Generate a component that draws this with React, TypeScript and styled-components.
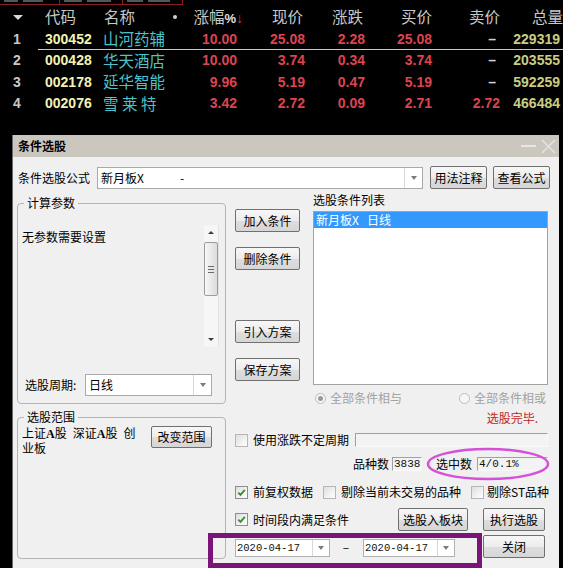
import React from "react";
import styled, { createGlobalStyle, css } from "styled-components";

const CJK = `"Noto Sans CJK SC", "Noto Sans", sans-serif`;
const NUM = `"Liberation Sans", Arial, sans-serif`;
const MONO = `"Liberation Mono", "DejaVu Sans Mono", monospace`;

const GlobalStyle = createGlobalStyle`
  html, body { margin: 0; padding: 0; background: #000; }
  body { width: 563px; height: 568px; overflow: hidden; font-family: ${CJK}; }
  *, *::before, *::after { box-sizing: border-box; }
`;

const Screen = styled.div`
  position: relative;
  width: 563px;
  height: 568px;
  overflow: hidden;
  background: #000;
  display: flex;
  flex-direction: column;
`;

/* ---------- top tab strip ---------- */
const TabStrip = styled.div`
  flex: none;
  display: flex;
  height: 6px;
`;
const TabPiece = styled.div<{ $w: number; $edge?: boolean }>`
  width: ${(p) => p.$w}px;
  height: 5px;
  display: flex;
  gap: 5px;
  padding: 0 4px;
  border-bottom: 1px solid #8c1e24;
  ${(p) => p.$edge && css`border-right: 1px solid #8c1e24;`}
`;
const TabGlyph = styled.span<{ $w: number }>`
  width: ${(p) => p.$w}px;
  height: 2px;
  background: #4d5a58;
`;

/* ---------- quote table ---------- */
const COLS = "38px 62px 80px 60px 65px 60px 67px 68px 63px";

const HeadRow = styled.div`
  flex: none;
  display: grid;
  grid-template-columns: ${COLS};
  height: 22px;
  align-items: center;
  color: #c8c8c8;
  font-family: ${CJK};
  font-size: 15.5px;
  line-height: 1;
`;
const HeadCell = styled.div<{ $left?: boolean; $pl?: number; $pr?: number }>`
  text-align: ${(p) => (p.$left ? "left" : "right")};
  padding-left: ${(p) => p.$pl ?? 0}px;
  padding-right: ${(p) => p.$pr ?? 0}px;
  white-space: nowrap;
`;
const SortCell = styled.div`
  padding-left: 13px;
  display: flex;
  align-items: center;
  &::before {
    content: "";
    border-left: 5px solid transparent;
    border-right: 5px solid transparent;
    border-top: 5px solid #d8d8d8;
  }
`;
const NameHead = styled.div`
  display: flex;
  align-items: center;
  justify-content: space-between;
  padding: 0 3px 0 4px;
`;
const Dot = styled.span`
  width: 4px;
  height: 4px;
  border-radius: 50%;
  background: #d0d0d0;
`;
const PctMark = styled.span`
  font-family: ${NUM};
  font-weight: bold;
  font-size: 13px;
  color: #e0e0e0;
`;
const SortArrow = styled.span`
  font-family: ${NUM};
  font-weight: bold;
  font-size: 14px;
  color: #e03040;
  margin-right: -3px;
`;

const DataRow = styled.div<{ $selected?: boolean }>`
  position: relative;
  flex: none;
  display: grid;
  grid-template-columns: ${COLS};
  height: 21.5px;
  align-items: center;
  font-family: ${NUM};
  font-weight: bold;
  font-size: 14px;
  line-height: 1;
  ${(p) =>
    p.$selected &&
    css`
      &::after {
        content: "";
        position: absolute;
        left: 38px;
        right: 0;
        bottom: 0;
        height: 1px;
        background: #cfcf98;
      }
    `}
`;
const IndexCell = styled.div`
  padding-left: 13px;
  color: #c8c8c8;
`;
const CodeCell = styled.div`
  padding-left: 7px;
  color: #f2f2b4;
`;
const NameCell = styled.div`
  padding-left: 3px;
  color: #4ec3cb;
  font-family: ${CJK};
  font-weight: normal;
  font-size: 15.5px;
  white-space: pre;
`;
const ValueCell = styled.div<{ $color: string; $pr?: number }>`
  text-align: right;
  padding-right: ${(p) => p.$pr ?? 0}px;
  color: ${(p) => p.$color};
  white-space: nowrap;
`;

/* ---------- dialog ---------- */
const Dialog = styled.div`
  flex: 1;
  margin: 21px 0 0 12px;
  width: 547px;
  display: flex;
  flex-direction: column;
  background: #f0f0f0;
  border-left: 1px solid #6c6c6c;
  font-family: ${CJK};
  font-size: 12px;
  line-height: 14px;
  color: #000;
`;
const TitleBar = styled.div`
  flex: none;
  height: 22px;
  background: #cbc7bf;
  display: flex;
  align-items: center;
  justify-content: space-between;
  padding: 0 3px 0 5px;
`;
const TitleText = styled.span`
  font-weight: bold;
  font-size: 12px;
`;
const WinControls = styled.div`
  display: flex;
  align-items: center;
  gap: 5px;
`;
const MinBar = styled.span`
  width: 15px;
  height: 1.5px;
  background: #e6e6e6;
`;

const Body = styled.div`
  flex: 1;
  padding: 9px 9px 0 4px;
  display: flex;
  flex-direction: column;
`;

const FormulaRow = styled.div`
  display: flex;
  align-items: center;
  height: 23px;
`;
const FieldLabel = styled.span<{ $w: number; $pl?: number; $ml?: number }>`
  flex: none;
  width: ${(p) => p.$w}px;
  padding-left: ${(p) => p.$pl ?? 0}px;
  margin-left: ${(p) => p.$ml ?? 0}px;
  white-space: nowrap;
`;

const Combo = styled.div<{ $w: number; $h: number }>`
  flex: none;
  width: ${(p) => p.$w}px;
  height: ${(p) => p.$h}px;
  display: flex;
  align-items: stretch;
  background: #fff;
  border: 1px solid #a9a9a9;
`;
const ComboText = styled.span`
  flex: 1;
  padding-left: 3px;
  display: flex;
  align-items: center;
  white-space: pre;
`;
const ComboDash = styled.span`
  margin-left: 36px;
`;
const ComboArrow = styled.span<{ $w: number }>`
  flex: none;
  width: ${(p) => p.$w}px;
  border-left: 1px solid #d8d8d8;
  display: flex;
  align-items: center;
  justify-content: center;
  &::before {
    content: "";
    border-left: 3.5px solid transparent;
    border-right: 3.5px solid transparent;
    border-top: 4px solid #7c7c7c;
  }
`;

const Button = styled.button<{ $w: number; $h?: number; $ml?: number; $mt?: number }>`
  flex: none;
  width: ${(p) => p.$w}px;
  height: ${(p) => p.$h ?? 23}px;
  margin: ${(p) => p.$mt ?? 0}px 0 0 ${(p) => p.$ml ?? 0}px;
  padding: 0;
  border: 1px solid #707070;
  border-radius: 2px;
  background: linear-gradient(#f7f7f7, #ececec 50%, #dedede 51%, #d6d6d6);
  font-family: ${CJK};
  font-size: 12px;
  line-height: 14px;
  color: #000;
  white-space: nowrap;
`;

const Main = styled.div`
  display: grid;
  grid-template-columns: 209px 315px;
  column-gap: 9px;
  margin-top: 7px;
`;
const LeftCol = styled.div`
  display: flex;
  flex-direction: column;
  gap: 6px;
`;
const GroupBox = styled.fieldset<{ $h: number }>`
  margin: 0;
  padding: 0;
  min-width: 0;
  height: ${(p) => p.$h}px;
  border: 1px solid #b4b4b4;
  border-radius: 4px;
`;
const GroupLegend = styled.legend`
  margin-left: 6px;
  padding: 0 3px;
  font-size: 12px;
  line-height: 14px;
`;
const ParamArea = styled.div`
  margin-top: 15px;
  height: 122px;
  display: flex;
`;
const ParamText = styled.div`
  flex: 1;
  padding: 5px 0 0 4px;
`;
const ScrollBar = styled.div`
  flex: none;
  width: 15px;
  margin-right: 6px;
  display: flex;
  flex-direction: column;
  align-items: center;
  background: #f6f6f6;
  border-right: 1px solid #e2e2e2;
`;
const ScrollArrow = styled.div<{ $down?: boolean }>`
  flex: none;
  width: 15px;
  height: 15px;
  display: flex;
  align-items: center;
  justify-content: center;
  &::before {
    content: "";
    border-left: 3px solid transparent;
    border-right: 3px solid transparent;
    ${(p) => (p.$down ? "border-top: 3px solid #3c3c3c;" : "border-bottom: 3px solid #3c3c3c;")}
  }
`;
const ScrollThumb = styled.div`
  flex: none;
  margin-top: 2px;
  width: 14px;
  height: 54px;
  border: 1px solid #9c9c9c;
  border-radius: 2px;
  background: linear-gradient(to right, #f7f7f7, #dcdcdc);
  display: flex;
  align-items: center;
  justify-content: center;
`;
const Grip = styled.span`
  width: 6px;
  height: 7px;
  background: repeating-linear-gradient(to bottom, #6a6a6a 0 1px, transparent 1px 3px);
`;
const ScrollTrack = styled.div`
  flex: 1;
`;
const PeriodRow = styled.div`
  margin-top: 27px;
  height: 22px;
  display: flex;
  align-items: center;
  padding-left: 7px;
`;
const ScopeRow = styled.div`
  display: flex;
  justify-content: space-between;
  align-items: flex-start;
  padding: 2px 13px 0 4px;
`;
const ScopeText = styled.div`
  width: 124px;
  padding-top: 0;
  line-height: 13px;
`;
const SerifA = styled.span`
  font-family: "Liberation Serif", serif;
  font-weight: bold;
  font-size: 12px;
`;

const RightCol = styled.div`
  display: flex;
  flex-direction: column;
`;
const TopPart = styled.div`
  display: grid;
  grid-template-columns: 65px 235px;
  column-gap: 13px;
`;
const ButtonStack = styled.div`
  display: flex;
  flex-direction: column;
  padding-top: 13px;
`;
const ListCol = styled.div`
  display: flex;
  flex-direction: column;
`;
const ListLabel = styled.div`
  margin-top: -3px;
`;
const ListBox = styled.div`
  margin-top: 4px;
  height: 174px;
  border: 1px solid #a3a3a3;
  background: #fff;
  padding: 0;
`;
const ListItem = styled.div<{ $selected?: boolean }>`
  height: 16px;
  padding-left: 2px;
  display: flex;
  align-items: center;
  white-space: pre;
  ${(p) => p.$selected && css`background: #3399ff; color: #fff;`}
`;
const RadioRow = styled.div`
  margin-top: 6px;
  height: 14px;
  display: grid;
  grid-template-columns: 144px auto;
  padding-left: 2px;
`;
const RadioItem = styled.label`
  display: flex;
  align-items: center;
  gap: 4px;
  color: #a2a2a2;
  white-space: nowrap;
`;
const RadioDot = styled.span<{ $on?: boolean }>`
  flex: none;
  width: 11px;
  height: 11px;
  border-radius: 50%;
  border: 1px solid #bcbcbc;
  background: #f6f6f6;
  display: flex;
  align-items: center;
  justify-content: center;
  &::before {
    content: "";
    width: 5px;
    height: 5px;
    border-radius: 50%;
    background: ${(p) => (p.$on ? "#9a9a9a" : "transparent")};
  }
`;
const StatusRow = styled.div`
  margin-top: 6px;
  text-align: right;
  padding-right: 12px;
  color: #c41e1e;
`;
const OptRow = styled.div<{ $mt: number }>`
  margin-top: ${(p) => p.$mt}px;
  height: 14px;
  display: flex;
  align-items: center;
`;
const PeriodOptRow = styled.div`
  margin-top: 8px;
  height: 14px;
  display: grid;
  grid-template-columns: 120px 193px;
  align-items: center;
`;
const CheckItem = styled.label<{ $gap?: number; $ml?: number }>`
  flex: none;
  display: flex;
  align-items: center;
  gap: ${(p) => p.$gap ?? 5}px;
  margin-left: ${(p) => p.$ml ?? 0}px;
  white-space: nowrap;
`;
const CheckBox = styled.span<{ $checked?: boolean }>`
  flex: none;
  width: 13px;
  height: 13px;
  border: 1px solid ${(p) => (p.$checked ? "#8e8e8e" : "#b6b6b6")};
  background: linear-gradient(135deg, #dedede, #ffffff);
  display: flex;
  align-items: center;
  justify-content: center;
`;
const SunkenField = styled.span<{ $w?: number }>`
  flex: none;
  ${(p) => (p.$w ? `width: ${p.$w}px;` : "")}
  height: 14px;
  border-top: 1px solid #a0a0a0;
  border-left: 1px solid #a0a0a0;
  border-bottom: 1px solid #fafafa;
  border-right: 1px solid #fafafa;
  background: #f3f3f3;
  font-family: ${MONO};
  font-size: 11px;
  line-height: 12px;
  padding-left: 1px;
  white-space: pre;
  color: #111;
`;
const ActionRow = styled.div`
  margin-top: 9px;
  height: 23px;
  display: grid;
  grid-template-columns: 148px 70px 62px;
  column-gap: 15px;
  align-items: center;
`;
const DateRow = styled.div`
  margin-top: 4px;
  height: 23px;
  display: grid;
  grid-template-columns: 95px 33px 92px 28px 62px;
  align-items: end;
`;
const DatePicker = styled.div`
  height: 18px;
  margin-bottom: 1px;
  display: flex;
  background: #fff;
  border: 1px solid #b0b0b0;
`;
const DateText = styled.span`
  flex: 1;
  padding-left: 1px;
  display: flex;
  align-items: center;
  font-family: ${MONO};
  font-size: 10.5px;
  color: #111;
`;
const DateDash = styled.span`
  align-self: center;
  text-align: center;
  padding-right: 1px;
`;

/* ---------- overlays (annotations drawn on the screenshot) ---------- */
const PurpleFrame = styled.div`
  position: absolute;
  left: 208px;
  top: 533px;
  width: 274px;
  height: 35px;
  border: 5px solid #7a1478;
  pointer-events: none;
`;
const EllipseMark = styled.svg`
  position: absolute;
  left: 425px;
  top: 446px;
  pointer-events: none;
`;

const CheckMark = () => (
  <svg width="9" height="9" viewBox="0 0 9 9">
    <path d="M1.3 4.6 L3.5 6.9 L7.8 1.9" fill="none" stroke="#3d8a34" strokeWidth="1.8" />
  </svg>
);

type Row = {
  i: number;
  code: string;
  name: string;
  pct: string;
  price: string;
  chg: string;
  bid: string;
  ask: string | null;
  vol: string;
};

const rows: Row[] = [
  { i: 1, code: "300452", name: "山河药辅", pct: "10.00", price: "25.08", chg: "2.28", bid: "25.08", ask: null, vol: "229319" },
  { i: 2, code: "000428", name: "华天酒店", pct: "10.00", price: "3.74", chg: "0.34", bid: "3.74", ask: null, vol: "203555" },
  { i: 3, code: "002178", name: "延华智能", pct: "9.96", price: "5.19", chg: "0.47", bid: "5.19", ask: null, vol: "592259" },
  { i: 4, code: "002076", name: "雪 莱 特", pct: "3.42", price: "2.72", chg: "0.09", bid: "2.71", ask: "2.72", vol: "466484" },
];

const RED = "#dc4450";
const VOL = "#cacd84";

export default function App() {
  return (
    <>
      <GlobalStyle />
      <Screen>
        <TabStrip>
          <TabPiece $w={60} $edge>
            <TabGlyph $w={14} />
            <TabGlyph $w={20} />
          </TabPiece>
          <TabPiece $w={63} $edge>
            <TabGlyph $w={18} />
            <TabGlyph $w={24} />
          </TabPiece>
          <TabPiece $w={60} $edge>
            <TabGlyph $w={16} />
            <TabGlyph $w={22} />
          </TabPiece>
        </TabStrip>

        <HeadRow>
          <SortCell />
          <HeadCell $left $pl={7}>代码</HeadCell>
          <NameHead>
            <span>名称</span>
            <Dot />
          </NameHead>
          <HeadCell $pr={0}>
            涨幅<PctMark>%</PctMark>
            <SortArrow>↓</SortArrow>
          </HeadCell>
          <HeadCell $pr={2}>现价</HeadCell>
          <HeadCell $pr={2}>涨跌</HeadCell>
          <HeadCell>买价</HeadCell>
          <HeadCell>卖价</HeadCell>
          <HeadCell>总量</HeadCell>
        </HeadRow>

        {rows.map((r) => (
          <DataRow key={r.i} $selected={r.i === 1}>
            <IndexCell>{r.i}</IndexCell>
            <CodeCell>{r.code}</CodeCell>
            <NameCell>{r.name}</NameCell>
            <ValueCell $color={RED} $pr={3}>{r.pct}</ValueCell>
            <ValueCell $color={RED}>{r.price}</ValueCell>
            <ValueCell $color={RED}>{r.chg}</ValueCell>
            <ValueCell $color={RED}>{r.bid}</ValueCell>
            {r.ask ? (
              <ValueCell $color={RED}>{r.ask}</ValueCell>
            ) : (
              <ValueCell $color="#d0d0d0" $pr={4}>–</ValueCell>
            )}
            <ValueCell $color={VOL} $pr={3}>{r.vol}</ValueCell>
          </DataRow>
        ))}

        <Dialog>
          <TitleBar>
            <TitleText>条件选股</TitleText>
            <WinControls>
              <MinBar />
              <svg width="15" height="15" viewBox="0 0 15 15">
                <path d="M1 1 L14 14 M14 1 L1 14" stroke="#e6e6e6" strokeWidth="1.4" />
              </svg>
            </WinControls>
          </TitleBar>

          <Body>
            <FormulaRow>
              <FieldLabel $w={80} $pl={1}>条件选股公式</FieldLabel>
              <Combo $w={326} $h={22}>
                <ComboText>
                  新月板X<ComboDash>-</ComboDash>
                </ComboText>
                <ComboArrow $w={18} />
              </Combo>
              <Button $w={57} $ml={7}>用法注释</Button>
              <Button $w={57} $ml={6}>查看公式</Button>
            </FormulaRow>

            <Main>
              <LeftCol>
                <GroupBox $h={208}>
                  <GroupLegend>计算参数</GroupLegend>
                  <ParamArea>
                    <ParamText>无参数需要设置</ParamText>
                    <ScrollBar>
                      <ScrollArrow />
                      <ScrollThumb>
                        <Grip />
                      </ScrollThumb>
                      <ScrollTrack />
                      <ScrollArrow $down />
                    </ScrollBar>
                  </ParamArea>
                  <PeriodRow>
                    <FieldLabel $w={60}>选股周期:</FieldLabel>
                    <Combo $w={127} $h={22}>
                      <ComboText>日线</ComboText>
                      <ComboArrow $w={18} />
                    </Combo>
                  </PeriodRow>
                </GroupBox>

                <GroupBox $h={149}>
                  <GroupLegend>选股范围</GroupLegend>
                  <ScopeRow>
                    <ScopeText>
                      上证<SerifA>A</SerifA>股{"\u2002"}深证<SerifA>A</SerifA>股{"\u2002"}创
                      <br />
                      业板
                    </ScopeText>
                    <Button $w={61} $h={22}>改变范围</Button>
                  </ScopeRow>
                </GroupBox>
              </LeftCol>

              <RightCol>
                <TopPart>
                  <ButtonStack>
                    <Button $w={65}>加入条件</Button>
                    <Button $w={65} $mt={15}>删除条件</Button>
                    <Button $w={65} $mt={50}>引入方案</Button>
                    <Button $w={65} $mt={15}>保存方案</Button>
                  </ButtonStack>
                  <ListCol>
                    <ListLabel>选股条件列表</ListLabel>
                    <ListBox>
                      <ListItem $selected>{"新月板X   日线"}</ListItem>
                    </ListBox>
                    <RadioRow>
                      <RadioItem>
                        <RadioDot $on />
                        全部条件相与
                      </RadioItem>
                      <RadioItem>
                        <RadioDot />
                        全部条件相或
                      </RadioItem>
                    </RadioRow>
                  </ListCol>
                </TopPart>

                <StatusRow>选股完毕.</StatusRow>

                <PeriodOptRow>
                  <CheckItem>
                    <CheckBox />
                    使用涨跌不定周期
                  </CheckItem>
                  <SunkenField />
                </PeriodOptRow>

                <OptRow $mt={10}>
                  <FieldLabel $w={39} $ml={118}>品种数</FieldLabel>
                  <SunkenField $w={30}>3838</SunkenField>
                  <FieldLabel $w={41} $ml={14}>选中数</FieldLabel>
                  <SunkenField $w={71}>4/0.1%</SunkenField>
                </OptRow>

                <OptRow $mt={14}>
                  <CheckItem>
                    <CheckBox $checked>
                      <CheckMark />
                    </CheckBox>
                    前复权数据
                  </CheckItem>
                  <CheckItem $ml={10}>
                    <CheckBox />
                    剔除当前未交易的品种
                  </CheckItem>
                  <CheckItem $ml={10} $gap={3}>
                    <CheckBox />
                    剔除ST品种
                  </CheckItem>
                </OptRow>

                <ActionRow>
                  <CheckItem>
                    <CheckBox $checked>
                      <CheckMark />
                    </CheckBox>
                    时间段内满足条件
                  </CheckItem>
                  <Button $w={70}>选股入板块</Button>
                  <Button $w={62}>执行选股</Button>
                </ActionRow>

                <DateRow>
                  <DatePicker>
                    <DateText>2020-04-17</DateText>
                    <ComboArrow $w={17} />
                  </DatePicker>
                  <DateDash>–</DateDash>
                  <DatePicker>
                    <DateText>2020-04-17</DateText>
                    <ComboArrow $w={17} />
                  </DatePicker>
                  <span />
                  <Button $w={62}>关闭</Button>
                </DateRow>
              </RightCol>
            </Main>
          </Body>
        </Dialog>

        <PurpleFrame />
        <EllipseMark width="126" height="36" viewBox="0 0 126 36">
          <ellipse cx="63" cy="18" rx="60" ry="15" fill="none" stroke="#d64fd9" strokeWidth="2.5" />
        </EllipseMark>
      </Screen>
    </>
  );
}
